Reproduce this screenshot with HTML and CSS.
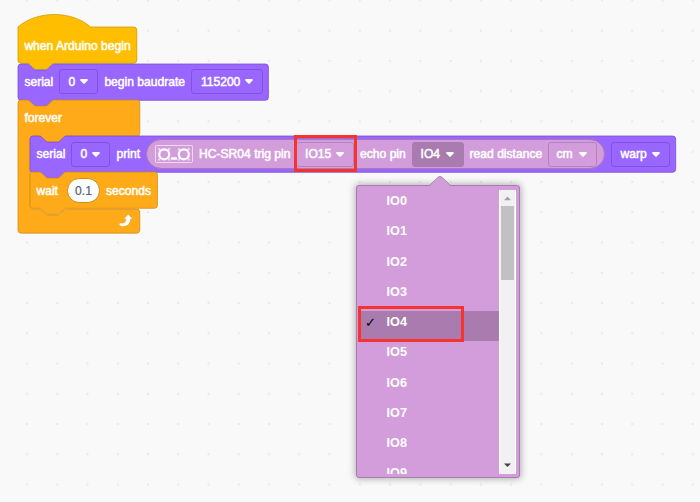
FILE: index.html
```html
<!DOCTYPE html>
<html lang="en">
<head>
<meta charset="utf-8">
<title>Arduino blocks</title>
<link rel="stylesheet" href="styles.css">
</head>
<body>
<svg class="defs" width="0" height="0">
  <symbol id="caret" viewBox="0 0 8 5"><path d="M1 0H7Q8.200 .4 7.600 1.400L4.700 4.600Q4 5.200 3.300 4.600L.4 1.400Q-.2 .4 1 0Z" fill="#fff"/></symbol>
</svg>
<main class="workspace">
  <svg class="grid" width="700" height="502">
    <pattern id="dots" x="26" y="-0.6" width="30.26" height="30.26" patternUnits="userSpaceOnUse"><rect width="2" height="2" fill="#e9e9e9"/></pattern>
    <rect width="700" height="502" fill="url(#dots)"/>
  </svg>
  <div class="script">
    <div class="block hat">
      <svg class="shape" fill="#ffbf00" stroke="#cc9900"><path transform="scale(.7565)" d="M0,0c25,-22 71,-22 96,0H153a4,4 0 0,1 4,4v40a4,4 0 0,1 -4,4H48c-2,0 -3,1 -4,2l-4,4c-1,1 -2,2 -4,2h-12c-2,0 -3,-1 -4,-2l-4,-4c-1,-1 -2,-2 -4,-2H4a4,4 0 0,1 -4,-4z"/></svg>
      <span class="label">when Arduino begin</span>
    </div>
    <div class="block">
      <svg class="shape" fill="#9966ff" stroke="#774dcb"><path transform="scale(.7565)" d="M0,4A4,4 0 0,1 4,0H12c2,0 3,1 4,2l4,4c1,1 2,2 4,2h12c2,0 3,-1 4,-2l4,-4c1,-1 2,-2 4,-2H327a4,4 0 0,1 4,4v40a4,4 0 0,1 -4,4H48c-2,0 -3,1 -4,2l-4,4c-1,1 -2,2 -4,2h-12c-2,0 -3,-1 -4,-2l-4,-4c-1,-1 -2,-2 -4,-2H4a4,4 0 0,1 -4,-4z"/></svg>
      <span class="label w-serial">serial</span>
      <span class="drop w-zero">0<svg class="caret"><use href="#caret"/></svg></span>
      <span class="label w-baud">begin baudrate</span>
      <span class="drop w-rate">115200<svg class="caret"><use href="#caret"/></svg></span>
    </div>
    <div class="loop">
      <svg class="shape" fill="#ffab19" stroke="#cf8b17"><path transform="scale(.7565)" d="M0,4A4,4 0 0,1 4,0H12c2,0 3,1 4,2l4,4c1,1 2,2 4,2h12c2,0 3,-1 4,-2l4,-4c1,-1 2,-2 4,-2H157a4,4 0 0,1 4,4v40a4,4 0 0,1 -4,4H64c-2,0 -3,1 -4,2l-4,4c-1,1 -2,2 -4,2h-12c-2,0 -3,-1 -4,-2l-4,-4c-1,-1 -2,-2 -4,-2H20a4,4 0 0,0 -4,4v88a4,4 0 0,0 4,4H28c2,0 3,1 4,2l4,4c1,1 2,2 4,2h12c2,0 3,-1 4,-2l4,-4c1,-1 2,-2 4,-2H157a4,4 0 0,1 4,4v24a4,4 0 0,1 -4,4H4a4,4 0 0,1 -4,-4z"/></svg>
      <div class="block"><span class="label">forever</span></div>
      <div class="loop-body">
        <div class="block">
          <svg class="shape" fill="#9966ff" stroke="#774dcb"><path transform="scale(.7565)" d="M0,4A4,4 0 0,1 4,0H12c2,0 3,1 4,2l4,4c1,1 2,2 4,2h12c2,0 3,-1 4,-2l4,-4c1,-1 2,-2 4,-2H849.500a4,4 0 0,1 4,4v40a4,4 0 0,1 -4,4H48c-2,0 -3,1 -4,2l-4,4c-1,1 -2,2 -4,2h-12c-2,0 -3,-1 -4,-2l-4,-4c-1,-1 -2,-2 -4,-2H4a4,4 0 0,1 -4,-4z"/></svg>
          <span class="label w-serial">serial</span>
          <span class="drop w-zero">0<svg class="caret"><use href="#caret"/></svg></span>
          <span class="label w-print">print</span>
          <div class="reporter">
            <svg class="sensor" viewBox="0 0 38 18"><rect x=".5" y=".5" width="37" height="17" rx="1" fill="none" stroke="#fff" stroke-opacity=".6"/><g fill="none" stroke="#fff" stroke-width="2.200"><circle cx="9.200" cy="9.3" r="5"/><circle cx="28.800" cy="9.300" r="5"/></g><path d="M3.300 3.200h2v2h-2zM13.100 3.200h2v2h-2zM3.300 13.400h2v2h-2zM13.100 13.400h2v2h-2zM22.900 3.200h2v2h-2zM32.700 3.200h2v2h-2zM22.900 13.400h2v2h-2zM32.700 13.400h2v2h-2z" fill="#fff" fill-opacity=".7"/><rect x="16" y="12.300" width="6" height="2.500" rx=".5" fill="#fff"/></svg>
            <span class="label w-trig">HC-SR04 trig pin</span>
            <span class="drop w-io15">IO15<svg class="caret"><use href="#caret"/></svg><i class="mark mark-pin"></i></span>
            <span class="label w-echo">echo pin</span>
            <span class="drop w-io4 active">IO4<svg class="caret"><use href="#caret"/></svg></span>
            <span class="label w-read">read distance</span>
            <span class="drop w-cm">cm<svg class="caret"><use href="#caret"/></svg></span>
          </div>
          <span class="drop w-warp">warp<svg class="caret"><use href="#caret"/></svg></span>
        </div>
        <div class="block">
          <svg class="shape" fill="#ffab19" stroke="#cf8b17"><path transform="scale(.7565)" d="M0,4A4,4 0 0,1 4,0H12c2,0 3,1 4,2l4,4c1,1 2,2 4,2h12c2,0 3,-1 4,-2l4,-4c1,-1 2,-2 4,-2H164.500a4,4 0 0,1 4,4v40a4,4 0 0,1 -4,4H48c-2,0 -3,1 -4,2l-4,4c-1,1 -2,2 -4,2h-12c-2,0 -3,-1 -4,-2l-4,-4c-1,-1 -2,-2 -4,-2H4a4,4 0 0,1 -4,-4z"/></svg>
          <span class="label w-wait">wait</span>
          <span class="number">0.1</span>
          <span class="label">seconds</span>
        </div>
      </div>
      <div class="loop-foot">
        <svg class="repeat" viewBox="0 0 14 13"><path d="M9.2 .3 13.7 5H11.500C11.400 9.6 8.500 12.300 4 12.500 1.6 12.500 .2 11.400 .2 10.2 .2 9.300 1.2 8.900 2.2 9.1 5 9.600 6.800 8.200 7 5H4.600Z" fill="#fff" stroke="#cf8b17" stroke-width=".3" stroke-linejoin="round"/></svg>
      </div>
    </div>
  </div>
  <div class="menu">
    <svg class="tip" viewBox="0 0 22 11"><path d="M0 10.5 9.3 1.3Q11 0 12.7 1.3L22 10.5V11H0Z" fill="#d39ddb"/><path d="M0 10 9.3 1.1Q11 -.1 12.7 1.1L22 10" fill="none" stroke="#a97bb0"/></svg>
    <div class="viewport">
      <ul class="options">
        <li>IO0</li><li>IO1</li><li>IO2</li><li>IO3</li>
        <li class="selected"><span class="check">✓</span>IO4<i class="mark mark-option"></i></li>
        <li>IO5</li><li>IO6</li><li>IO7</li><li>IO8</li><li>IO9</li>
      </ul>
      <div class="scrollbar">
        <svg class="arrow" viewBox="0 0 16 16"><path d="M4.300 10.300 8 6.500 11.700 10.300Z" fill="#a3a3a3"/></svg>
        <div class="thumb"></div>
        <svg class="arrow" viewBox="0 0 16 16"><path d="M4.300 5.200 8 9 11.700 5.200Z" fill="#404040"/></svg>
      </div>
    </div>
  </div>
</main>
</body>
</html>
```
FILE: styles.css
```css
* { box-sizing: border-box; }
body { margin: 0; }
.defs { position: absolute; }
.workspace {
  position: relative;
  width: 700px;
  height: 502px;
  overflow: hidden;
  background: #f9f9f9;
  font-family: "Liberation Sans", Arial, sans-serif;
  font-size: 12.1px;
  color: #fff;
}
.grid { position: absolute; inset: 0; }
.script { position: absolute; left: 18.2px; top: 27.3px; }
.block {
  position: relative;
  display: flex;
  align-items: center;
  gap: 6px;
  height: 36.3px;
  padding-left: 6.2px;
  white-space: nowrap;
}
.block.hat { padding-top: 2px; }
.shape {
  position: absolute;
  left: 0;
  top: 0;
  width: 1px;
  height: 1px;
  overflow: visible;
  stroke-width: 1;
}
.label, .drop { position: relative; flex: none; -webkit-text-stroke: .5px #fff; }
.drop {
  display: flex;
  align-items: center;
  justify-content: space-between;
  height: 25px;
  padding: 0 9px 0 8px;
  border: 1px solid rgba(70, 30, 140, .28);
  border-radius: 3px;
}
.caret { width: 8px; height: 5px; }
.w-serial { width: 29px; }
.w-zero { width: 39px; }
.w-baud { width: 80.500px; }
.w-rate { width: 72.500px; padding-left: 9px; }
.w-print { width: 24px; }
.w-trig { width: 91px; }
.w-io15 { width: 58px; }
.w-echo { width: 45.500px; }
.w-io4 { width: 52px; }
.w-read { width: 72px; }
.w-cm { width: 49px; }
.w-warp { width: 59px; }
.w-wait { width: 24.500px; }
.reporter {
  position: relative;
  display: flex;
  align-items: center;
  gap: 6px;
  flex: none;
  width: 459px;
  height: 30.3px;
  padding-left: 7.600px;
  border: 1px solid #a97bb0;
  border-radius: 15.2px;
  background: #d39ddb;
}
.reporter .drop { border-color: #b584bd; }
.reporter .drop.active { background: #a97bae; border-color: #a97bae; }
.sensor { width: 38px; height: 18px; flex: none; }
.loop { position: relative; height: 133.1px; }
.loop-body { padding-left: 12.1px; }
.loop-foot {
  position: relative;
  display: flex;
  align-items: center;
  justify-content: flex-end;
  width: 121.800px;
  height: 24.200px;
  padding-right: 7px;
}
.repeat { width: 14px; height: 13px; }
.number {
  position: relative;
  width: 33px;
  height: 24.500px;
  border: 1px solid #cf8b17;
  border-radius: 12.200px;
  background: #fff;
  color: #575e75;
  text-align: center;
  line-height: 24px;
  -webkit-text-stroke: .2px #575e75;
}
.mark { position: absolute; border: 3px solid #f7322f; }
.mark-pin { left: -3px; top: -7.500px; width: 63px; height: 37px; }
.menu {
  position: absolute;
  left: 356px;
  top: 185px;
  width: 164px;
  height: 293px;
  padding: 4px 3px 4px 0;
  border: 1px solid #a97bb0;
  border-radius: 3px;
  background: #d39ddb;
  box-shadow: 0 0 7px 1px rgba(0, 0, 0, .3);
}
.tip { position: absolute; left: 71.500px; top: -10px; width: 22px; height: 11px; }
.viewport { display: flex; height: 283.500px; overflow: hidden; }
.options { flex: 1; margin: 0; padding: 0 0 0 3px; list-style: none; font-size: 12.700px; font-weight: 700; }
.options li { position: relative; height: 30.250px; padding-left: 26.500px; line-height: 22px; }
.options .selected { background: #a97bae; }
.check { position: absolute; left: 5px; top: 0; color: #000; font: 700 13px/23px "DejaVu Sans", sans-serif; }
.mark-option { left: -2px; top: -5px; width: 106px; height: 36px; }
.scrollbar { display: flex; flex-direction: column; width: 17px; background: #f1f1f1; border: 0 solid #fff; border-width: 0 1px; }
.arrow { width: 15px; height: 16px; flex: none; }
.thumb { width: 12.500px; height: 74px; margin: 0 auto auto; background: #c1c1c1; }
```
